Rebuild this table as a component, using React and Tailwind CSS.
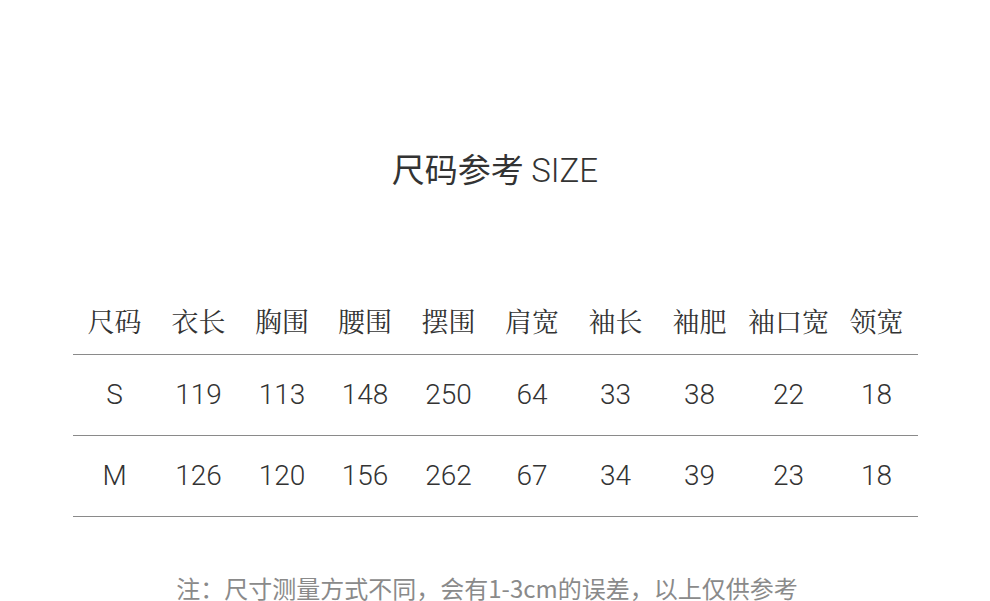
import React from "react";

const headers = ["尺码", "衣长", "胸围", "腰围", "摆围", "肩宽", "袖长", "袖肥", "袖口宽", "领宽"];

const rows = [
  ["S", "119", "113", "148", "250", "64", "33", "38", "22", "18"],
  ["M", "126", "120", "156", "262", "67", "34", "39", "23", "18"],
];

const cols = "grid grid-cols-[84px_84px_83px_83px_84px_83px_84px_84px_94px_82px]";

const App = () => {
  return (
    <div className="w-[990px] h-[601px] bg-white overflow-hidden flex flex-col items-center">
      <h1 className="pt-[148px] h-[190px] leading-[40px] text-[33px] text-[#333] font-['Noto_Sans_CJK_SC',sans-serif]">
        尺码参考 <span className="font-light font-['Roboto',sans-serif]">SIZE</span>
      </h1>

      <div className="mt-[98px] w-[845px]">
        <div className={`${cols} h-[67px] items-center border-b border-[#8a8a8a] text-[27px] text-[#333] font-['Noto_Serif_CJK_SC','Noto_Sans_CJK_SC',serif]`}>
          {headers.map((h) => (
            <div key={h} className="text-center">
              {h}
            </div>
          ))}
        </div>
        {rows.map((row) => (
          <div
            key={row[0]}
            className={`${cols} h-[81px] items-center border-b border-[#8a8a8a] text-[28px] font-light text-[#333] font-['Roboto',sans-serif]`}
          >
            {row.map((v, i) => (
              <div key={i} className="text-center">
                {v}
              </div>
            ))}
          </div>
        ))}
      </div>

      <p className="mt-[59px] mr-[16px] leading-[24px] text-[24px] text-[#8a8a8a] font-['Noto_Sans_CJK_SC',sans-serif]">
        注：尺寸测量方式不同，会有1-3cm的误差，以上仅供参考
      </p>
    </div>
  );
};

export default App;
